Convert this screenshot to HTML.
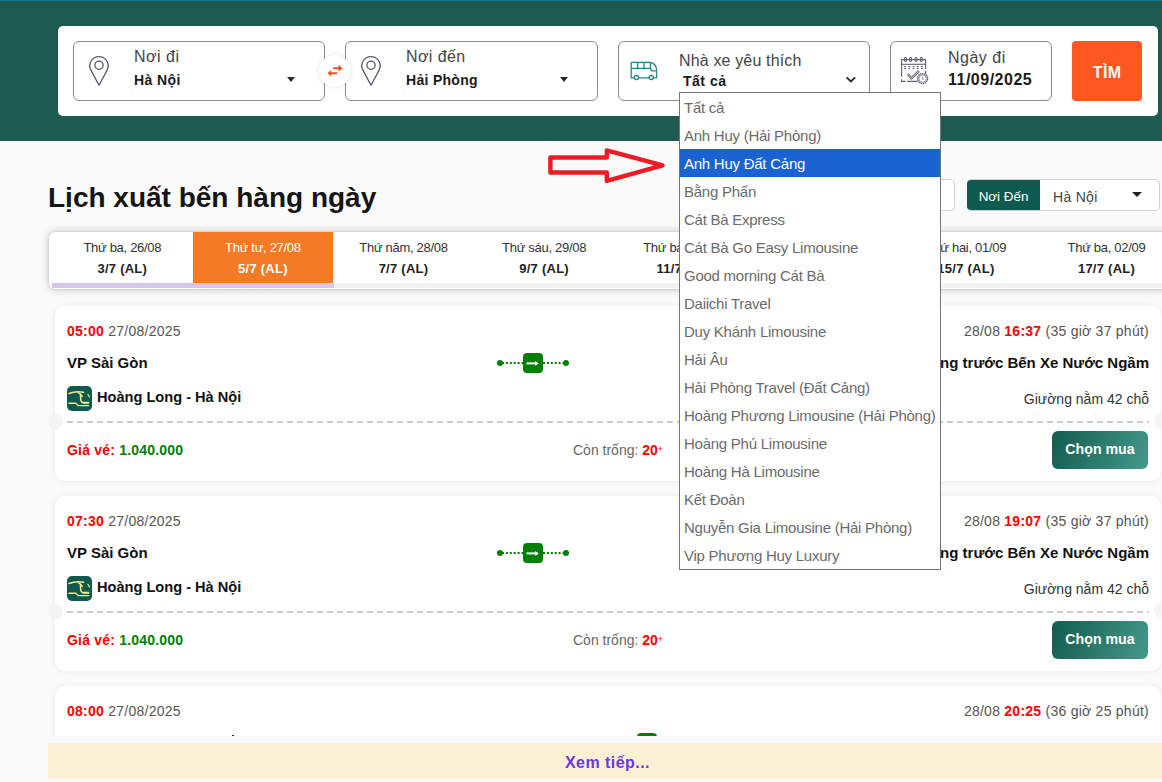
<!DOCTYPE html>
<html><head><meta charset="utf-8">
<style>
*{box-sizing:border-box;margin:0;padding:0}
html,body{width:1162px;height:782px;overflow:hidden;background:#fafafa;font-family:"Liberation Sans",sans-serif;color:#111}
.abs{position:absolute}
#topline{left:0;top:0;width:1162px;height:1px;background:#0f7098}
#header{left:0;top:1px;width:1162px;height:140px;background:#1d5a50}
#panel{left:58px;top:26px;width:1100px;height:90px;background:#fff;border-radius:5px}
.field{top:41px;height:60px;border:1px solid #8a8a8a;border-radius:6px;background:#fff}
.lbl{font-size:16px;color:#444;white-space:nowrap}
.val{font-size:14px;font-weight:bold;color:#1a1a1a;white-space:nowrap}
.caret{width:0;height:0;border-left:4.8px solid transparent;border-right:4.8px solid transparent;border-top:5px solid #2a2a2a}
#tim{left:1072px;top:41px;width:70px;height:60px;background:#ff5722;border-radius:4px;color:#fff;font-weight:bold;font-size:16px;letter-spacing:.4px;text-indent:.4px;text-align:center;line-height:63.5px}
#title{left:48px;top:182px;font-size:28px;font-weight:bold;color:#151515;white-space:nowrap}
#strip{left:49px;top:232px;width:1130px;height:56.5px;background:#fff;border-radius:6px;box-shadow:0 0 8px rgba(0,0,0,.24),0 0 2px rgba(0,0,0,.15)}
.tab{top:232px;height:51px;width:140.6px;text-align:center;white-space:nowrap}
.tab .d{position:absolute;left:0;right:0;top:8px;font-size:13px;color:#333;letter-spacing:-.3px}
.tab .a{position:absolute;left:0;right:0;top:29px;font-size:13px;font-weight:bold;color:#222;letter-spacing:.25px}
.tab.on{background:#f47a26}
.tab.on .d,.tab.on .a{color:#fff}
.card{left:55px;width:1106px;height:175px;background:#fff;border-radius:10px;box-shadow:0 0 6px rgba(0,0,0,.07)}
.t13{font-size:14px;white-space:nowrap}
.red{color:#f00}
.grn{color:#008000}
.b{font-weight:bold}
#more{left:48px;top:743px;width:1114px;height:36px;background:#faf0d2;color:#6a35ee;font-weight:bold;font-size:16px;letter-spacing:.45px;text-align:center;line-height:39px;text-indent:5px}
#dd{left:679px;top:92px;width:262px;height:478px;background:#fff;border:1px solid #767676;overflow:hidden}
.opt{height:28px;line-height:29px;padding-left:4px;font-size:15px;letter-spacing:-.25px;color:#6b6b6b;white-space:nowrap}
.opt.sel{background:#1a62d2;color:#fff}
.ab{position:absolute}
.t14{font-size:14px;white-space:nowrap;line-height:16px}
.t15{font-size:15px;white-space:nowrap;line-height:17px;color:#111}
.r{text-align:right}
.gray{color:#555}
.gray2{color:#333}
.logo{width:25px;height:25px}
.logo svg,.route svg{display:block}
.dash{height:2px;background:repeating-linear-gradient(90deg,#cdcdcd 0 6px,transparent 6px 10px)}
.btn{width:96px;height:38px;border-radius:6px;background:linear-gradient(110deg,#125c50,#45998a);color:#fff;font-weight:bold;font-size:14.2px;text-align:center;line-height:37px}
.notch{width:15px;height:15px;border-radius:50%;background:#f4f4f4}
sup{font-size:9px;vertical-align:top;position:relative;top:-1px}
</style></head><body>
<div id="topline" class="abs"></div>
<div id="header" class="abs"></div>
<div id="panel" class="abs"></div>

<div class="field abs" style="left:73px;width:252px"></div>
<div class="field abs" style="left:345px;width:253px"></div>
<div class="field abs" style="left:618px;width:252px"></div>
<div class="field abs" style="left:890px;width:162px"></div>
<div id="tim" class="abs">TÌM</div>
<svg class="abs" style="left:84px;top:50px" width="30" height="40" viewBox="84 50 30 40"><path d="M99 85.2 L90.9 70.1 A9.2 9.2 0 1 1 107.1 70.1 Z" fill="none" stroke="#555a6e" stroke-width="1.3" stroke-linejoin="round"/><circle cx="99" cy="65.2" r="4.1" fill="none" stroke="#555a6e" stroke-width="1.3"/></svg>
<svg class="abs" style="left:356px;top:50px" width="30" height="40" viewBox="84 50 30 40"><path d="M99 85.2 L90.9 70.1 A9.2 9.2 0 1 1 107.1 70.1 Z" fill="none" stroke="#555a6e" stroke-width="1.3" stroke-linejoin="round"/><circle cx="99" cy="65.2" r="4.1" fill="none" stroke="#555a6e" stroke-width="1.3"/></svg>
<div class="abs" style="left:319px;top:55px;width:32px;height:32px;border-radius:50%;background:#fff;box-shadow:0 0 5px rgba(0,0,0,.12)"></div>
<svg class="abs" style="left:319px;top:55px" width="32" height="32" viewBox="319 55 32 32"><path d="M334 68.2 H339.5 M336.5 73.3 H330.5" stroke="#ee5022" stroke-width="1.9" stroke-linecap="round"/><path d="M338.9 65.4 L342.3 68.2 L338.9 71 Z M330.9 70.5 L327.9 73.3 L330.9 76.1 Z" fill="#ee5022" stroke="#ee5022" stroke-width=".6" stroke-linejoin="round"/></svg>
<svg class="abs" style="left:620px;top:50px" width="50" height="40" viewBox="620 50 50 40"><g fill="none" stroke="#1f8a80" stroke-width="1.3" stroke-linejoin="round"><path d="M631.2 77.8 V62.9 Q631.2 62.3 631.8 62.3 H650.2 Q656.6 63.5 656.6 70.5 V77.8 Z"/><path d="M631.2 68.4 H650.5 M637.6 62.3 V68.4 M644 62.3 V68.4 M650.1 62.3 L650.8 69.6 Q651 70.9 652.4 70.9 H656.6"/></g><circle cx="636.4" cy="77.6" r="2.1" fill="#fff" stroke="#1f8a80" stroke-width="1.3"/><circle cx="651.3" cy="77.6" r="2.1" fill="#fff" stroke="#1f8a80" stroke-width="1.3"/></svg>
<svg class="abs" style="left:895px;top:50px" width="40" height="40" viewBox="895 50 40 40"><g fill="none" stroke="#5f6275" stroke-width="1.1"><path d="M901.6 76.8 V59.6 H925.6 V69.3 M925.6 70.9 V74 M901.6 79.2 V81.4 H905.6 M907.3 81.4 H917.5"/><path d="M901.6 64.3 H925.6"/><path d="M904.2 66.5 H924.2 M904.2 68.4 H924.2" stroke-dasharray="1.8 2.4"/><ellipse cx="905.5" cy="59.4" rx="1.1" ry="2.1"/><ellipse cx="910.6" cy="59.4" rx="1.1" ry="2.1"/><ellipse cx="916" cy="59.4" rx="1.1" ry="2.1"/><ellipse cx="921.3" cy="59.4" rx="1.1" ry="2.1"/></g><path d="M908.6 75 L911.4 78.4 L918.3 71.7" fill="none" stroke="#5f6275" stroke-width="2.4" stroke-linejoin="round" stroke-linecap="round"/><path d="M908.6 75 L911.4 78.4 L918.3 71.7" fill="none" stroke="#fff" stroke-width=".7" stroke-linejoin="round" stroke-linecap="round"/><circle cx="922.6" cy="78.6" r="4.9" fill="#fff" stroke="#5f6275" stroke-width="1.6" stroke-dasharray="1.4 .6"/><circle cx="922.6" cy="78.6" r="3.6" fill="none" stroke="#5f6275" stroke-width=".6"/><path d="M922 76.6 L923.4 80" stroke="#5f6275" stroke-width=".8"/></svg>
<svg class="abs" style="left:845px;top:75px" width="13" height="9" viewBox="0 0 13 9"><path d="M1.6 2.4 L5.9 6.5 L10.2 2.4" fill="none" stroke="#2a2a2a" stroke-width="1.9"/></svg>

<div class="abs lbl" style="left:134px;top:48px;letter-spacing:.5px">Nơi đi</div>
<div class="abs val" style="left:134px;top:72px;letter-spacing:.4px">Hà Nội</div>
<div class="abs caret" style="left:287.3px;top:77px"></div>
<div class="abs lbl" style="left:406px;top:48px;letter-spacing:.4px">Nơi đến</div>
<div class="abs val" style="left:406px;top:72px;letter-spacing:.3px">Hải Phòng</div>
<div class="abs caret" style="left:560.3px;top:77px"></div>
<div class="abs lbl" style="left:679px;top:51.5px;letter-spacing:.15px">Nhà xe yêu thích</div>
<div class="abs val" style="left:683px;top:73px;letter-spacing:.5px">Tất cả</div>
<div class="abs lbl" style="left:948px;top:49px;letter-spacing:.5px">Ngày đi</div>
<div class="abs val" style="left:948px;top:71px;font-size:16px;letter-spacing:.5px">11/09/2025</div>

<div id="title" class="abs">Lịch xuất bến hàng ngày</div>
<div class="abs" style="left:760px;top:179px;width:195px;height:32px;border:1px solid #d0d0d0;border-radius:5px;background:#fff"></div>
<div class="abs" style="left:967px;top:179px;width:193px;height:32px;border:1px solid #d0d0d0;border-radius:5px;background:#fff"></div>
<div class="abs" style="left:967px;top:180px;width:73px;height:30px;background:#0f5a4e;border-radius:4px 0 0 4px;color:#fff;font-size:13.4px;line-height:34px;text-align:center;white-space:nowrap">Nơi Đến</div>
<div class="abs" style="left:1053px;top:182px;font-size:14px;letter-spacing:.3px;line-height:30px;color:#444;white-space:nowrap">Hà Nội</div>
<div class="abs caret" style="left:1132px;top:192px;border-left-width:5px;border-right-width:5px;border-top-width:5px;border-top-color:#222"></div>
<svg class="abs" style="left:540px;top:140px" width="130" height="50" viewBox="540 140 130 50"><path d="M550.4 157.5 H606.8 V150.4 L662.6 165.3 L606.8 180.8 V172.5 H550.4 Z" fill="none" stroke="#ed1c24" stroke-width="4.4" stroke-linejoin="round"/></svg>

<div id="strip" class="abs"></div>
<div class="abs" style="left:52px;top:283px;width:1110px;height:5px;background:#f1f1f1"></div>
<div class="abs" style="left:52px;top:283px;width:282px;height:5px;background:#d4c6ec"></div>
<div class="tab abs" style="left:52.0px"><div class="d">Thứ ba, 26/08</div><div class="a">3/7 (AL)</div></div>
<div class="tab abs on" style="left:192.6px"><div class="d">Thứ tư, 27/08</div><div class="a">5/7 (AL)</div></div>
<div class="tab abs" style="left:333.2px"><div class="d">Thứ năm, 28/08</div><div class="a">7/7 (AL)</div></div>
<div class="tab abs" style="left:473.8px"><div class="d">Thứ sáu, 29/08</div><div class="a">9/7 (AL)</div></div>
<div class="tab abs" style="left:614.4px"><div class="d">Thứ bảy, 30/08</div><div class="a">11/7 (AL)</div></div>
<div class="tab abs" style="left:755.0px"><div class="d">Chủ nhật, 31/08</div><div class="a">13/7 (AL)</div></div>
<div class="tab abs" style="left:895.6px"><div class="d">Thứ hai, 01/09</div><div class="a">15/7 (AL)</div></div>
<div class="tab abs" style="left:1036.2px"><div class="d">Thứ ba, 02/09</div><div class="a">17/7 (AL)</div></div>

<div class="abs" style="left:0;top:0;width:1162px;height:736px;overflow:hidden">
<div class="card abs" style="top:306px">
<div class="ab t14" style="left:12px;top:17px;letter-spacing:.25px"><span class="red b">05:00</span> <span class="gray">27/08/2025</span></div>
<div class="ab t15 b" style="left:12px;top:48px">VP Sài Gòn</div>
<div class="ab logo" style="left:12px;top:80px"><svg width="25" height="25" viewBox="0 0 25 25"><rect width="25" height="25" rx="5" fill="#0f5a4e"/><g stroke="#f5ea8a" fill="none" stroke-linecap="round" stroke-linejoin="round"><path d="M2 7.5 Q9 4.6 16.6 6.3" stroke-width="1.5"/><path d="M11.2 6.6 Q13.6 7.4 15.3 10.4" stroke-width="1.4"/><path d="M13.4 8.6 L13.8 14.6 Q14.3 16.6 16.6 16.6 H21.6" stroke-width="1.5"/><path d="M16 17.2 H21.6" stroke-width="1.2"/><path d="M20.9 8.4 L22.5 11" stroke-width="1.1"/><path d="M2 17.3 H8.7 L11.2 19.6 H21.6" stroke-width="1.4"/></g></svg></div>
<div class="ab t15 b" style="left:42px;top:83px;font-size:14.6px">Hoàng Long - Hà Nội</div>
<div class="ab dash" style="left:12px;top:115px;right:12px"></div>
<div class="ab t14 b" style="left:12px;top:136px;letter-spacing:.2px"><span class="red">Giá vé:</span> <span class="grn">1.040.000</span></div>
<div class="ab route" style="left:429px;top:47px"><svg width="88" height="20" viewBox="0 0 88 20"><circle cx="16" cy="10" r="3" fill="#008000"/><circle cx="82" cy="10" r="3" fill="#008000"/><path d="M18 10 H39 M59 10 H80" stroke="#008000" stroke-width="2.2" stroke-dasharray="2 1.9"/><rect x="39" y="0" width="20" height="20" rx="4" fill="#008000"/><path d="M42.5 10.4 H52" stroke="#fff" stroke-width="2"/><path d="M51.3 7.9 L54.8 10.4 L51.3 12.9 Z" fill="#fff"/></svg></div>
<div class="ab t14" style="left:518px;top:136px"><span style="color:#666">Còn trống:</span> <span class="red b">20</span><sup class="red">+</sup></div>
<div class="ab t14 r" style="right:12px;top:17px;letter-spacing:.25px"><span class="gray">28/08</span> <span class="red b">16:37</span> <span class="gray">(35 giờ 37 phút)</span></div>
<div class="ab t15 b r" style="right:12px;top:48px">Văn phòng trước Bến Xe Nước Ngầm</div>
<div class="ab t14 r gray2" style="right:12px;top:85px">Giường nằm 42 chỗ</div>
<div class="ab btn" style="left:997px;top:125px">Chọn mua</div>
<div class="ab notch" style="left:-7.5px;top:107.5px"></div>
<div class="ab notch" style="right:-7.5px;top:107px"></div>
</div>
<div class="card abs" style="top:496px">
<div class="ab t14" style="left:12px;top:17px;letter-spacing:.25px"><span class="red b">07:30</span> <span class="gray">27/08/2025</span></div>
<div class="ab t15 b" style="left:12px;top:48px">VP Sài Gòn</div>
<div class="ab logo" style="left:12px;top:80px"><svg width="25" height="25" viewBox="0 0 25 25"><rect width="25" height="25" rx="5" fill="#0f5a4e"/><g stroke="#f5ea8a" fill="none" stroke-linecap="round" stroke-linejoin="round"><path d="M2 7.5 Q9 4.6 16.6 6.3" stroke-width="1.5"/><path d="M11.2 6.6 Q13.6 7.4 15.3 10.4" stroke-width="1.4"/><path d="M13.4 8.6 L13.8 14.6 Q14.3 16.6 16.6 16.6 H21.6" stroke-width="1.5"/><path d="M16 17.2 H21.6" stroke-width="1.2"/><path d="M20.9 8.4 L22.5 11" stroke-width="1.1"/><path d="M2 17.3 H8.7 L11.2 19.6 H21.6" stroke-width="1.4"/></g></svg></div>
<div class="ab t15 b" style="left:42px;top:83px;font-size:14.6px">Hoàng Long - Hà Nội</div>
<div class="ab dash" style="left:12px;top:115px;right:12px"></div>
<div class="ab t14 b" style="left:12px;top:136px;letter-spacing:.2px"><span class="red">Giá vé:</span> <span class="grn">1.040.000</span></div>
<div class="ab route" style="left:429px;top:47px"><svg width="88" height="20" viewBox="0 0 88 20"><circle cx="16" cy="10" r="3" fill="#008000"/><circle cx="82" cy="10" r="3" fill="#008000"/><path d="M18 10 H39 M59 10 H80" stroke="#008000" stroke-width="2.2" stroke-dasharray="2 1.9"/><rect x="39" y="0" width="20" height="20" rx="4" fill="#008000"/><path d="M42.5 10.4 H52" stroke="#fff" stroke-width="2"/><path d="M51.3 7.9 L54.8 10.4 L51.3 12.9 Z" fill="#fff"/></svg></div>
<div class="ab t14" style="left:518px;top:136px"><span style="color:#666">Còn trống:</span> <span class="red b">20</span><sup class="red">+</sup></div>
<div class="ab t14 r" style="right:12px;top:17px;letter-spacing:.25px"><span class="gray">28/08</span> <span class="red b">19:07</span> <span class="gray">(35 giờ 37 phút)</span></div>
<div class="ab t15 b r" style="right:12px;top:48px">Văn phòng trước Bến Xe Nước Ngầm</div>
<div class="ab t14 r gray2" style="right:12px;top:85px">Giường nằm 42 chỗ</div>
<div class="ab btn" style="left:997px;top:125px">Chọn mua</div>
<div class="ab notch" style="left:-7.5px;top:107.5px"></div>
<div class="ab notch" style="right:-7.5px;top:107px"></div>
</div>
<div class="card abs" style="top:686px">
<div class="ab t14" style="left:12px;top:17px;letter-spacing:.25px"><span class="red b">08:00</span> <span class="gray">27/08/2025</span></div>
<div class="ab" style="left:177px;top:49px;width:2px;height:1px;background:#223"></div>
<div class="ab logo" style="left:12px;top:80px"><svg width="25" height="25" viewBox="0 0 25 25"><rect width="25" height="25" rx="5" fill="#0f5a4e"/><g stroke="#f5ea8a" fill="none" stroke-linecap="round" stroke-linejoin="round"><path d="M2 7.5 Q9 4.6 16.6 6.3" stroke-width="1.5"/><path d="M11.2 6.6 Q13.6 7.4 15.3 10.4" stroke-width="1.4"/><path d="M13.4 8.6 L13.8 14.6 Q14.3 16.6 16.6 16.6 H21.6" stroke-width="1.5"/><path d="M16 17.2 H21.6" stroke-width="1.2"/><path d="M20.9 8.4 L22.5 11" stroke-width="1.1"/><path d="M2 17.3 H8.7 L11.2 19.6 H21.6" stroke-width="1.4"/></g></svg></div>
<div class="ab t15 b" style="left:42px;top:83px;font-size:14.6px">Hoàng Long - Hà Nội</div>
<div class="ab dash" style="left:12px;top:115px;right:12px"></div>
<div class="ab t14 b" style="left:12px;top:136px;letter-spacing:.2px"><span class="red">Giá vé:</span> <span class="grn">1.040.000</span></div>
<div class="ab route" style="left:543px;top:47px"><svg width="88" height="20" viewBox="0 0 88 20"><circle cx="16" cy="10" r="3" fill="#008000"/><circle cx="82" cy="10" r="3" fill="#008000"/><path d="M18 10 H39 M59 10 H80" stroke="#008000" stroke-width="2.2" stroke-dasharray="2 1.9"/><rect x="39" y="0" width="20" height="20" rx="4" fill="#008000"/><path d="M42.5 10.4 H52" stroke="#fff" stroke-width="2"/><path d="M51.3 7.9 L54.8 10.4 L51.3 12.9 Z" fill="#fff"/></svg></div>
<div class="ab t14" style="left:518px;top:136px"><span style="color:#666">Còn trống:</span> <span class="red b">20</span><sup class="red">+</sup></div>
<div class="ab t14 r" style="right:12px;top:17px;letter-spacing:.25px"><span class="gray">28/08</span> <span class="red b">20:25</span> <span class="gray">(36 giờ 25 phút)</span></div>
<div class="ab t15 b r" style="right:12px;top:48px">Văn phòng trước Bến Xe Nước Ngầm</div>
<div class="ab t14 r gray2" style="right:12px;top:85px">Giường nằm 42 chỗ</div>
<div class="ab btn" style="left:997px;top:125px">Chọn mua</div>
<div class="ab notch" style="left:-7.5px;top:107.5px"></div>
<div class="ab notch" style="right:-7.5px;top:107px"></div>
</div>


</div>
<div id="more" class="abs">Xem tiếp...</div>

<div id="dd" class="abs">
<div class="opt">Tất cả</div>
<div class="opt">Anh Huy (Hải Phòng)</div>
<div class="opt sel">Anh Huy Đất Cảng</div>
<div class="opt">Bằng Phấn</div>
<div class="opt">Cát Bà Express</div>
<div class="opt">Cát Bà Go Easy Limousine</div>
<div class="opt">Good morning Cát Bà</div>
<div class="opt">Daiichi Travel</div>
<div class="opt">Duy Khánh Limousine</div>
<div class="opt">Hải Âu</div>
<div class="opt">Hải Phòng Travel (Đất Cảng)</div>
<div class="opt">Hoàng Phương Limousine (Hải Phòng)</div>
<div class="opt">Hoàng Phú Limousine</div>
<div class="opt">Hoàng Hà Limousine</div>
<div class="opt">Kết Đoàn</div>
<div class="opt">Nguyễn Gia Limousine (Hải Phòng)</div>
<div class="opt">Vip Phương Huy Luxury</div>
</div>
</body></html>
